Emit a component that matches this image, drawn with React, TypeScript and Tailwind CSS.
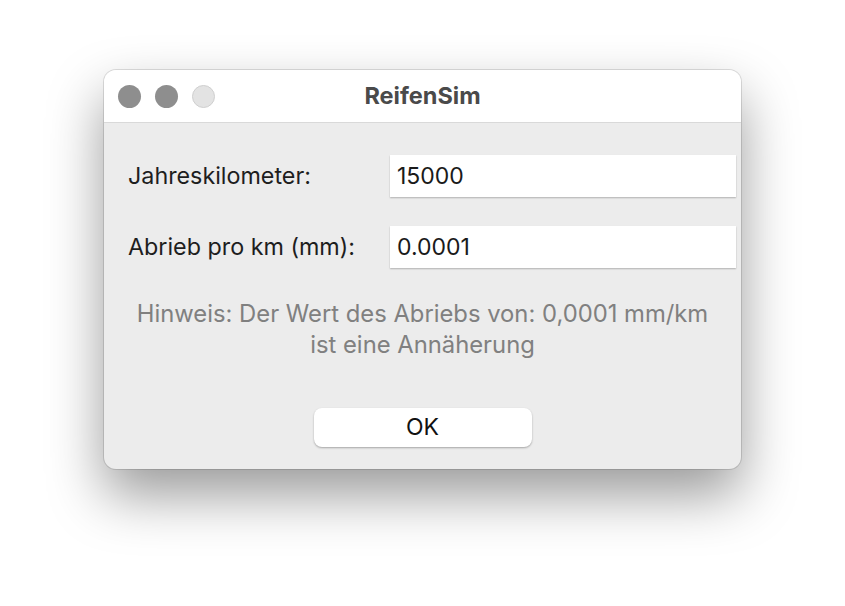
import React from "react";

const font = { fontFamily: "Inter, 'Noto Sans', sans-serif" };

const Field = ({ label, value }: { label: string; value: string }) => (
  <div className="flex items-center h-[42px]">
    <span className="w-[286px] pl-[24px] text-[23.3px] text-[#1e1e1e]">{label}</span>
    <div className="flex-1 h-[42px] mr-[5px] bg-white shadow-[0_1px_1.5px_rgba(0,0,0,0.25)] flex items-center pl-[7px] text-[23px] text-[#1a1a1a]">
      {value}
    </div>
  </div>
);

export default function App() {
  return (
    <div className="w-[845px] h-[606px] bg-white pt-[70px] pl-[104px]" style={font}>
      <div className="w-[637px] h-[399px] rounded-[12px] bg-[#ececec] shadow-[0_26px_55px_rgba(0,0,0,0.4),0_0_0_1px_rgba(0,0,0,0.12)] overflow-hidden flex flex-col">
        <div className="h-[53px] bg-white border-b border-[#d9d9d9] flex items-center relative">
          <div className="flex gap-[14px] pl-[14px]">
            <span className="w-[23px] h-[23px] rounded-full bg-[#8e8e8e]" />
            <span className="w-[23px] h-[23px] rounded-full bg-[#8e8e8e]" />
            <span className="w-[23px] h-[23px] rounded-full bg-[#e3e3e3] border border-[#cfcfcf]" />
          </div>
          <div className="absolute inset-0 flex items-center justify-center text-[23.5px] font-bold text-[#4a4a4a]">
            ReifenSim
          </div>
        </div>
        <div className="flex flex-col pt-[32px]">
          <Field label="Jahreskilometer:" value="15000" />
          <div className="h-[29px]" />
          <Field label="Abrieb pro km (mm):" value="0.0001" />
          <div className="mt-[30px] text-center text-[23.8px] leading-[31px] text-[#808080]">
            Hinweis: Der Wert des Abriebs von: 0,0001 mm/km
            <br />
            ist eine Annäherung
          </div>
          <div className="flex justify-center mt-[48px]">
            <button className="w-[218px] h-[39px] rounded-[8px] bg-white shadow-[0_1px_2px_rgba(0,0,0,0.3)] text-[23px] text-[#111]">
              OK
            </button>
          </div>
        </div>
      </div>
    </div>
  );
}
